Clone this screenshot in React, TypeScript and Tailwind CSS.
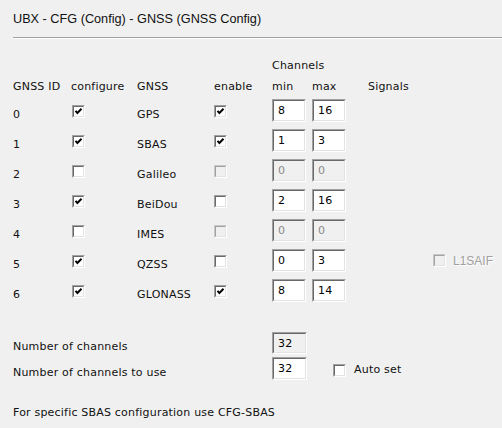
import React from "react"

type Row = {
  id: number
  configure: boolean
  name: string
  enable: boolean
  enableDisabled?: boolean
  min: string
  max: string
  disabled?: boolean
  signal?: string
}

const rows: Row[] = [
  { id: 0, configure: true, name: "GPS", enable: true, min: "8", max: "16" },
  { id: 1, configure: true, name: "SBAS", enable: true, min: "1", max: "3" },
  { id: 2, configure: false, name: "Galileo", enable: false, enableDisabled: true, min: "0", max: "0", disabled: true },
  { id: 3, configure: true, name: "BeiDou", enable: false, min: "2", max: "16" },
  { id: 4, configure: false, name: "IMES", enable: false, enableDisabled: true, min: "0", max: "0", disabled: true },
  { id: 5, configure: true, name: "QZSS", enable: false, min: "0", max: "3", signal: "L1SAIF" },
  { id: 6, configure: true, name: "GLONASS", enable: true, min: "8", max: "14" },
]

function CheckBox({ checked, disabled }: { checked?: boolean; disabled?: boolean }) {
  return (
    <div
      className={
        disabled
          ? "size-[13px] border border-t-[#c8c8c8] border-l-[#c8c8c8] border-b-white border-r-white"
          : "size-[13px] border border-t-[#a0a0a0] border-l-[#a0a0a0] border-b-white border-r-white"
      }
    >
      <div
        className={
          disabled
            ? "size-full border border-t-[#a0a0a0] border-l-[#a0a0a0] border-b-[#e3e3e3] border-r-[#e3e3e3] bg-[#f0f0f0]"
            : "size-full border border-t-[#696969] border-l-[#696969] border-b-[#e3e3e3] border-r-[#e3e3e3] bg-white"
        }
      >
        {checked && (
          <svg width="9" height="9" viewBox="0 0 9 9" className="block">
            <polyline points="1.5,3.8 3.4,6 7.5,1.8" fill="none" stroke="#000" strokeWidth="2" />
          </svg>
        )}
      </div>
    </div>
  )
}

function Field({ value, disabled, readOnly, w = "w-[34px]", h = "h-[23px]" }: { value: string; disabled?: boolean; readOnly?: boolean; w?: string; h?: string }) {
  const bg = disabled || readOnly ? "bg-[#f0f0f0]" : "bg-white"
  const fg = disabled ? "text-[#8a8a8a]" : "text-black"
  return (
    <div className={`${w} ${h} border border-t-[#a0a0a0] border-l-[#a0a0a0] border-b-white border-r-white`}>
      <div className={`size-full border border-t-[#696969] border-l-[#696969] border-b-[#e3e3e3] border-r-[#e3e3e3] ${bg} ${fg} pl-[4px] pt-[3px] leading-[13px]`}>
        {value}
      </div>
    </div>
  )
}

export default function App() {
  return (
    <div className="h-[428px] w-full bg-[#f0f0f0] pl-[13px] font-['DejaVu_Sans',sans-serif] text-[11px] leading-[13px] tracking-[0.2px] text-[#111]">
      <div className="pt-[12px] font-['Liberation_Sans',Arial,sans-serif] text-[12.7px] leading-[15px] tracking-normal">
        UBX - CFG (Config) - GNSS (GNSS Config)
      </div>
      <div className="mt-[10px] border-t border-b border-t-[#a0a0a0] border-b-white" />

      <div className="pt-[20px] pl-[259px]">Channels</div>
      <div className="mt-[8px] flex">
        <div className="w-[58px]">GNSS ID</div>
        <div className="w-[66px]">configure</div>
        <div className="w-[77px]">GNSS</div>
        <div className="w-[58px]">enable</div>
        <div className="w-[40px]">min</div>
        <div className="w-[56px]">max</div>
        <div>Signals</div>
      </div>

      <div className="mt-[6px]">
        {rows.map((r) => (
          <div key={r.id} className="flex h-[30px] items-start">
            <div className="w-[58px] pt-[9px]">{r.id}</div>
            <div className="w-[66px] pl-[1px] pt-[6px]">
              <CheckBox checked={r.configure} />
            </div>
            <div className="w-[77px] pt-[9px]">{r.name}</div>
            <div className="w-[58px] pt-[6px]">
              <CheckBox checked={r.enable} disabled={r.enableDisabled} />
            </div>
            <div className="w-[40px]">
              <Field value={r.min} disabled={r.disabled} />
            </div>
            <div className="w-[121px]">
              <Field value={r.max} disabled={r.disabled} />
            </div>
            {r.signal && (
              <div className="flex items-start pt-[5px]">
                <CheckBox disabled />
                <span className="ml-[7px] font-['Liberation_Sans',Arial,sans-serif] text-[12px] leading-[14px] tracking-normal text-[#a0a0a0] [text-shadow:1px_1px_0_#fff]">
                  {r.signal}
                </span>
              </div>
            )}
          </div>
        ))}
      </div>

      <div className="mt-[23px] flex h-[25px] items-start">
        <div className="w-[259px] pt-[8px]">Number of channels</div>
        <Field value="32" readOnly w="w-[35px]" h="h-[22px]" />
      </div>
      <div className="flex h-[23px] items-start">
        <div className="w-[259px] pt-[9px]">Number of channels to use</div>
        <Field value="32" w="w-[35px]" />
        <div className="ml-[26px] pt-[7px]">
          <CheckBox />
        </div>
        <div className="ml-[8px] pt-[6px]">Auto set</div>
      </div>

      <div className="mt-[26px]">For specific SBAS configuration use CFG-SBAS</div>
    </div>
  )
}
